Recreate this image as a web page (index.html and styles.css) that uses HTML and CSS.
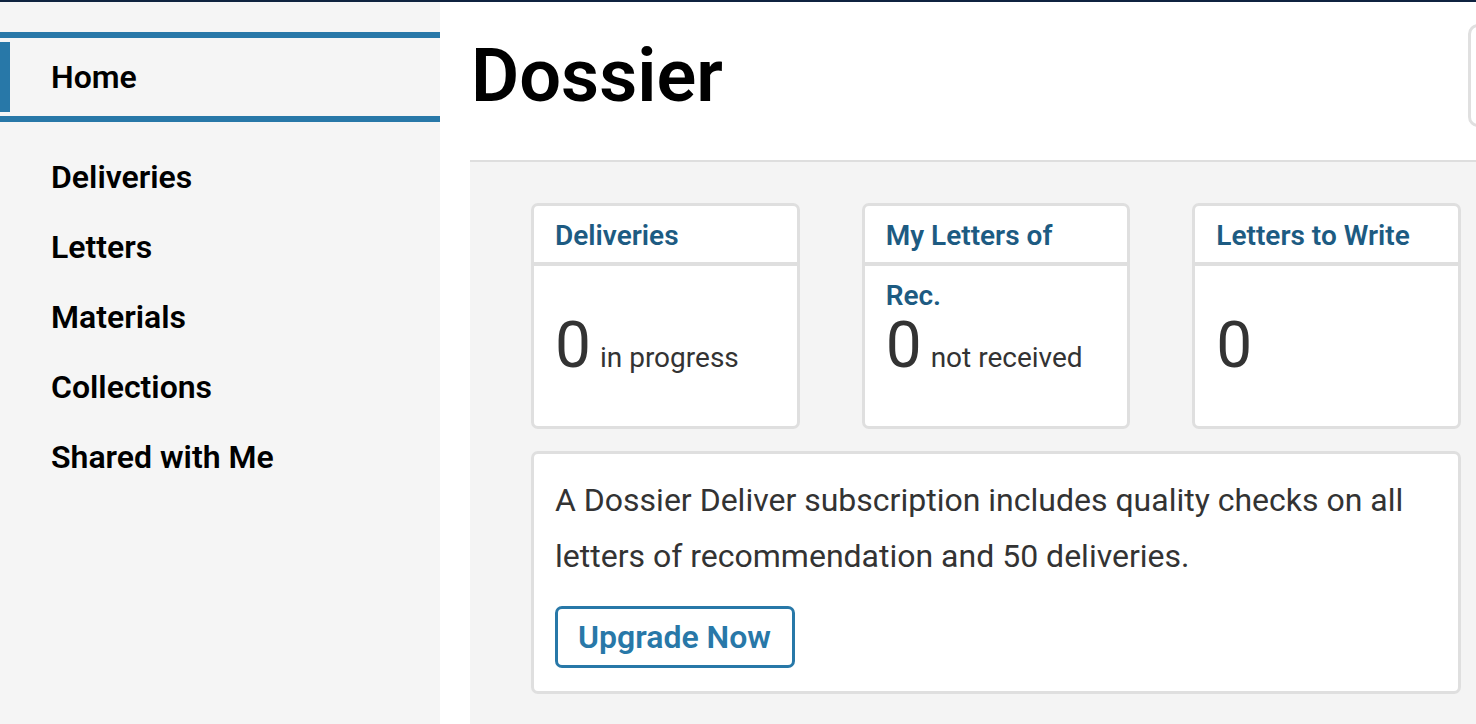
FILE: index.html
```html
<!DOCTYPE html>
<html lang="en">
<head>
<meta charset="utf-8">
<title>Dossier</title>
<link rel="stylesheet" href="styles.css">
</head>
<body>
<div class="topbar"></div>
<div class="layout">
  <nav class="sidebar">
    <ul class="nav">
      <li class="nav-item active"><span class="bar"></span><span class="label">Home</span></li>
      <li class="nav-item"><span class="label">Deliveries</span></li>
      <li class="nav-item"><span class="label">Letters</span></li>
      <li class="nav-item"><span class="label">Materials</span></li>
      <li class="nav-item"><span class="label">Collections</span></li>
      <li class="nav-item"><span class="label">Shared with Me</span></li>
    </ul>
  </nav>
  <main class="main">
    <header class="header">
      <h1 class="title">Dossier</h1>
      <div class="header-box"></div>
    </header>
    <section class="content">
      <div class="grid">
        <div class="card">
          <div class="card-head">Deliveries</div>
          <div class="card-body"><span class="num">0</span><span class="sub">in progress</span></div>
        </div>
        <div class="card">
          <div class="card-head">My Letters of Rec.</div>
          <div class="card-body"><span class="num">0</span><span class="sub">not received</span></div>
        </div>
        <div class="card">
          <div class="card-head">Letters to Write</div>
          <div class="card-body"><span class="num">0</span></div>
        </div>
        <div class="card wide">
          <p class="promo">A Dossier Deliver subscription includes quality checks on all letters of recommendation and 50 deliveries.</p>
          <button class="btn">Upgrade Now</button>
        </div>
      </div>
    </section>
  </main>
</div>
</body>
</html>
```
FILE: styles.css
```css
html, body {
  margin: 0;
  padding: 0;
  height: 100%;
}
body {
  font-family: Roboto, "Liberation Sans", Arial, sans-serif;
  color: #333;
  background: #fff;
  overflow: hidden;
}
.topbar {
  height: 2px;
  background: #0f2340;
}
.layout {
  display: flex;
  height: calc(100% - 2px);
}
.sidebar {
  width: 440px;
  flex: 0 0 440px;
  background: #f5f5f5;
  padding-top: 30px;
}
.nav {
  list-style: none;
  margin: 0;
  padding: 0;
}
.nav-item {
  display: flex;
  align-items: center;
  height: 70px;
  font-size: 32px;
  font-weight: 600;
  color: #000;
}
.nav-item .label {
  padding-left: 51px;
}
.nav-item.active {
  height: 78px;
  border-top: 6px solid #2878a8;
  border-bottom: 6px solid #2878a8;
  margin-bottom: 20px;
  box-sizing: content-box;
}
.nav-item.active .bar {
  align-self: stretch;
  width: 10px;
  margin: 4px 0;
  background: #2878a8;
}
.nav-item.active .label {
  padding-left: 41px;
}
.main {
  flex: 1;
  min-width: 0;
  padding-left: 30px;
  display: flex;
  flex-direction: column;
}
.header {
  height: 158px;
  flex: 0 0 158px;
  display: flex;
  justify-content: space-between;
  align-items: flex-start;
  margin-right: -230px;
}
.title {
  margin: 37px 0 0 1px;
  font-size: 74px;
  line-height: 1;
  font-weight: 600;
  color: #000;
}
.header-box {
  flex: 0 0 232px;
  height: 97px;
  margin-top: 22px;
  border: 3px solid #e0e0e0;
  border-radius: 10px;
}
.content {
  flex: 1;
  background: #f4f4f4;
  border-top: 2px solid #dedede;
  padding: 41px 0 0 61px;
}
.grid {
  width: 930px;
  display: grid;
  grid-template-columns: repeat(3, 1fr);
  column-gap: 62px;
  row-gap: 22px;
}
.card {
  background: #fff;
  border: 3px solid #dfdfdf;
  border-radius: 7px;
}
.card-head {
  height: 56px;
  padding: 0 21px;
  line-height: 60px;
  font-size: 28px;
  font-weight: 600;
  color: #1d5b82;
  border-bottom: 4px solid #dfdfdf;
}
.card-body {
  height: 64px;
  padding: 48px 21px;
  display: flex;
  align-items: baseline;
  gap: 9px;
}
.num {
  font-size: 64px;
  line-height: 1;
  color: #333;
}
.sub {
  font-size: 28px;
  color: #333;
}
.wide {
  grid-column: 1 / -1;
  padding: 18px 21px 23px;
}
.promo {
  margin: 0;
  font-size: 32px;
  line-height: 56px;
  color: #333;
}
.btn {
  display: block;
  margin-top: 22px;
  height: 62px;
  width: 240px;
  border: 3px solid #2878a8;
  border-radius: 7px;
  background: #fff;
  color: #2878a8;
  font-family: Roboto, "Liberation Sans", Arial, sans-serif;
  font-size: 32px;
  font-weight: 600;
  padding: 0 20px;
  text-align: left;
  white-space: nowrap;
}
```
